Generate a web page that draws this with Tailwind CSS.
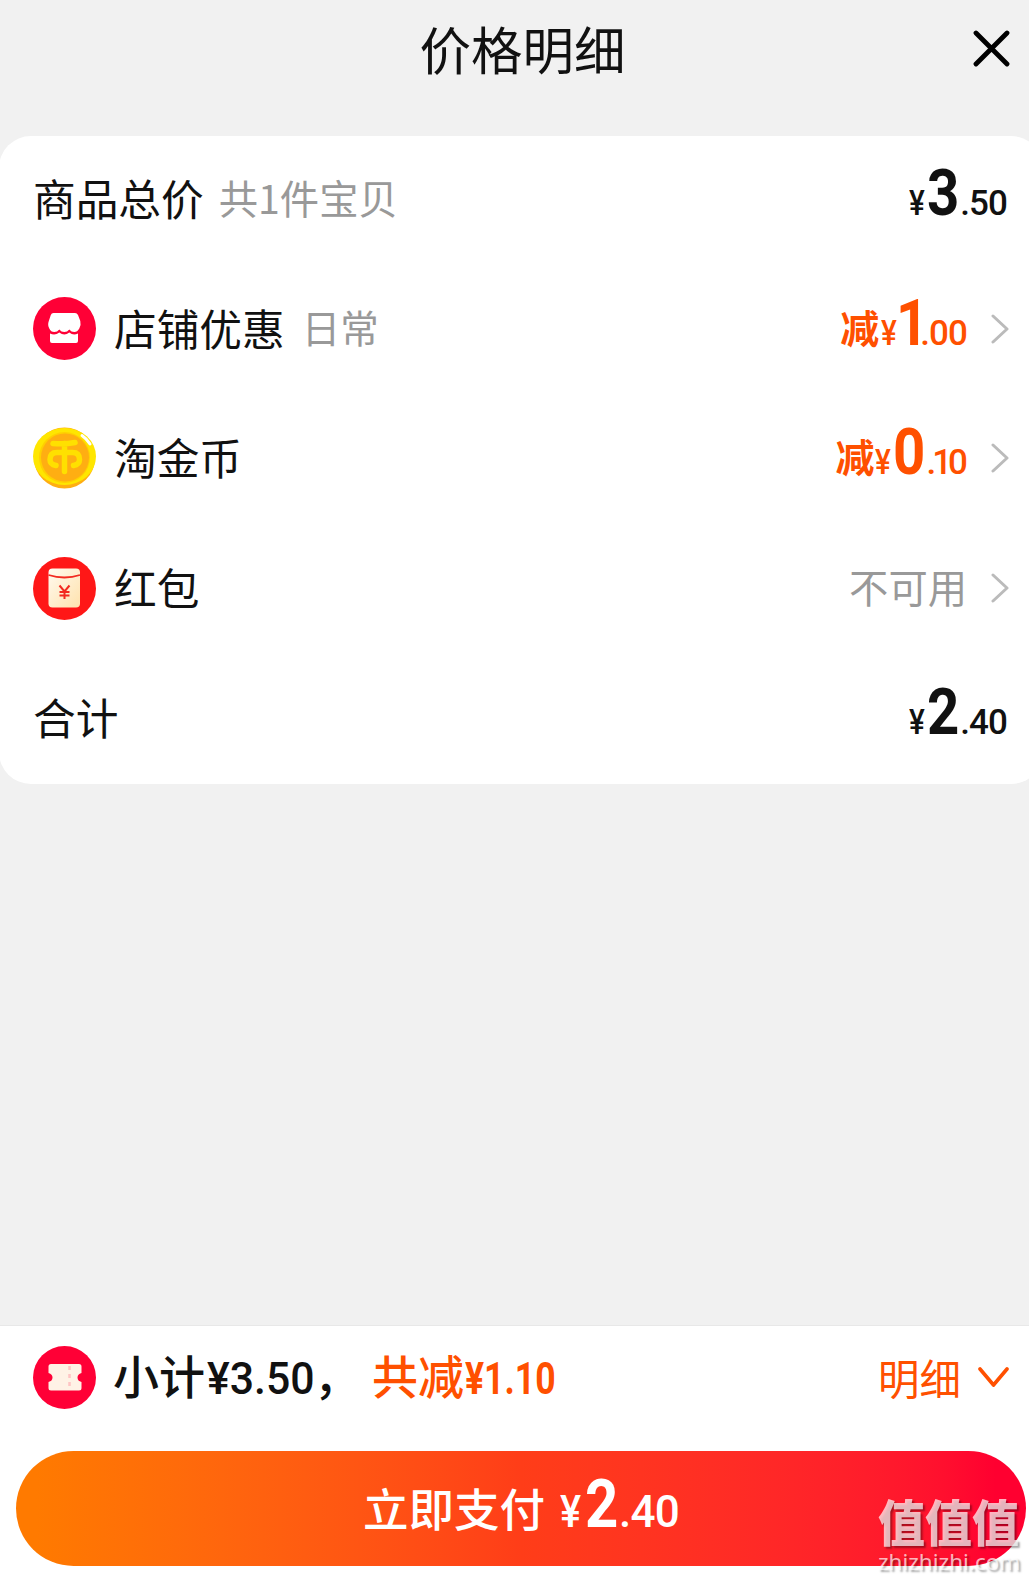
<!DOCTYPE html>
<html lang="zh-CN">
<head>
  <meta charset="UTF-8" />
  <meta name="viewport" content="width=device-width, initial-scale=1.0"/>
  <title>价格明细</title>
  <script src="https://cdn.jsdelivr.net/npm/@tailwindcss/browser@4"></script>
</head>
<body class="bg-[#f1f1f1] text-[#111] font-['Noto_Sans_CJK_SC',sans-serif] overflow-hidden">

  <div class="relative w-[1029px] h-[1580px] flex flex-col overflow-hidden">

    <!-- header -->
    <header class="h-[136px] shrink-0 grid grid-cols-[1fr_auto_1fr] items-start pl-[35px] pr-[19px]">
      <span></span>
      <h1 class="text-[51.5px] leading-[95px]">价格明细</h1>
      <button class="justify-self-end mt-[30px]">
        <svg class="w-[37px] h-[37px]" viewBox="0 0 37 37" fill="none" stroke="#000" stroke-width="4.8" stroke-linecap="round"><path d="M3 3l31 31M34 3L3 34"/></svg>
      </button>
    </header>

    <!-- price card, its right edge runs past the screen -->
    <main class="h-[648px] shrink-0 -ml-px -mr-[14px] pl-[34px] pr-[34px] bg-white rounded-[32px] grid grid-rows-5">
      <div class="flex items-center justify-between pr-[2px] pb-[4px]">
        <div class="flex items-center leading-[60px] pb-[4px]">
          <span class="text-[42.7px]">商品总价</span>
          <span class="text-[39.3px] ml-[15px] text-[#999]">共1件宝贝</span>
        </div>
        <div class="flex items-baseline font-[Roboto,sans-serif] font-medium text-[35px] leading-[60px]">
          <span class="w-[18px] origin-left scale-x-85">¥</span>
          <span class="w-[33px] origin-left scale-x-88 text-[64px] font-bold">3</span>
          <span class="tracking-[-0.9px]">.50</span>
        </div>
      </div>

      <div class="flex items-center pb-[3px]">
        <svg class="w-[63px] h-[63px]" viewBox="0 0 63 63">
          <circle cx="31.5" cy="31.5" r="31.5" fill="#ff0036"/>
          <path fill="#fff" d="M20.500 16h21.500q2 0 3 2l2.300 6q1 4-1 7.500-2 3.500-5 3.500-3 0-5-2.500-2 2.500-5 2.500t-5-2.500q-2 2.500-5 2.500-3.500 0-5-3.500-2-3.500-.500-7.500l2-6q.700-2 2.700-2z"/>
          <path fill="#fff" d="M17 36.500q5 2.500 9.300-1 5 4 10 0 4 3.500 8.700 1v7.500q0 2-2 2H19q-2 0-2-2z"/>
        </svg>
        <span class="text-[42.7px] ml-[18px] pb-[4px]">店铺优惠</span>
        <span class="text-[38.5px] ml-[17px] pb-[4px] text-[#999]">日常</span>
        <div class="ml-auto flex items-baseline font-[Roboto,sans-serif] font-medium text-[35px] leading-[60px] text-[#ff5000]">
          <span class="text-[39px] w-[41px] -translate-y-[2px] font-['Noto_Sans_CJK_SC',sans-serif] font-bold">减</span>
          <span class="w-[15px] origin-left scale-x-85">¥</span>
          <span class="w-[24px] origin-left scale-x-88 text-[64px] font-bold">1</span>
          <span class="tracking-[-0.9px]">.00</span>
        </div>
        <svg class="w-[18px] h-[30px] ml-[24px]" viewBox="0 0 18 30" fill="none" stroke="#bbb" stroke-width="3" stroke-linecap="round" stroke-linejoin="round"><path d="M2 2l14 13L2 28"/></svg>
      </div>

      <div class="flex items-center pb-[3px]">
        <svg class="w-[63px] h-[63px]" viewBox="0 0 63 63">
          <circle cx="31.500" cy="31" r="30.500" fill="#ffae12"/>
          <ellipse cx="31.500" cy="29.500" rx="31.500" ry="28.500" fill="#ffe600"/>
          <circle cx="31.500" cy="30.500" r="25.500" fill="#ffd000"/>
          <circle cx="32" cy="30.500" r="24" fill="#ffae12"/>
          <path fill="none" stroke="#ffe000" stroke-width="5.500" stroke-linecap="round" stroke-linejoin="round" d="M20 16.500q12 1 22-1M31.500 16.500v28M23 38.500q-6-1-6-6 0-7 7-7h15.500q7 0 7 7 0 5-6 6"/>
          <path fill="none" stroke="#fff" stroke-width="3" stroke-linecap="round" d="M49 8.500q5 3.500 8 8.500"/>
        </svg>
        <span class="text-[42.7px] ml-[18px] pb-[4px]">淘金币</span>
        <div class="ml-auto flex items-baseline font-[Roboto,sans-serif] font-medium text-[35px] leading-[60px] text-[#ff5000]">
          <span class="text-[39px] w-[40px] -translate-y-[2px] font-['Noto_Sans_CJK_SC',sans-serif] font-bold">减</span>
          <span class="w-[18px] origin-left scale-x-85">¥</span>
          <span class="w-[33px] origin-left scale-x-88 text-[64px] font-bold">0</span>
          <span class="tracking-[-4px] mr-[3px]">.10</span>
        </div>
        <svg class="w-[18px] h-[30px] ml-[24px]" viewBox="0 0 18 30" fill="none" stroke="#bbb" stroke-width="3" stroke-linecap="round" stroke-linejoin="round"><path d="M2 2l14 13L2 28"/></svg>
      </div>

      <div class="flex items-center pb-[3px]">
        <svg class="w-[63px] h-[63px]" viewBox="0 0 63 63">
          <defs><linearGradient id="packet" x2="1" y2="1"><stop stop-color="#fffaf0"/><stop offset="1" stop-color="#ffe2ad"/></linearGradient></defs>
          <circle cx="31.5" cy="31.500" r="31.500" fill="#ff1717"/>
          <rect x="15.500" y="11.500" width="31.500" height="39" rx="4" fill="url(#packet)"/>
          <path fill="none" stroke="#f22a20" stroke-width="1.800" d="M15.500 18q16 5 31.500 0"/>
          <path fill="none" stroke="#f22a20" stroke-width="2" d="M26.500 28.500l5 6 5-6M31.500 34.500V42M26.500 35h10M26.500 38.500h10"/>
        </svg>
        <span class="text-[42.7px] ml-[18px] pb-[4px]">红包</span>
        <span class="ml-auto text-[39.3px] pb-[3px] text-[#999]">不可用</span>
        <svg class="w-[18px] h-[30px] ml-[24px]" viewBox="0 0 18 30" fill="none" stroke="#bbb" stroke-width="3" stroke-linecap="round" stroke-linejoin="round"><path d="M2 2l14 13L2 28"/></svg>
      </div>

      <div class="flex items-center justify-between pr-[2px] pb-[3px]">
        <span class="text-[42.7px] pb-[3px]">合计</span>
        <div class="flex items-baseline font-[Roboto,sans-serif] font-medium text-[35px] leading-[60px]">
          <span class="w-[18px] origin-left scale-x-85">¥</span>
          <span class="w-[33px] origin-left scale-x-88 text-[64px] font-bold">2</span>
          <span class="tracking-[-0.9px]">.40</span>
        </div>
      </div>
    </main>

    <!-- bottom bar -->
    <footer class="mt-auto h-[255px] shrink-0 bg-white border-t border-[#e8e8e8]">
      <div class="flex items-center h-[102px] pl-[33px] pr-[20px]">
        <svg class="w-[63px] h-[63px]" viewBox="0 0 63 63">
          <circle cx="31.500" cy="31.500" r="31.500" fill="#ff0036"/>
          <path fill="#fff2e6" d="M18 18h28q2.500 0 2.500 2.500V27q-4 1-4 4.500t4 4.500v6q0 2.500-2.500 2.500H18q-2.500 0-2.500-2.500v-6q4-1 4-4.500t-4-4.500v-6.500Q15.500 18 18 18z"/>
          <path stroke="#ffc4c4" stroke-width="2.500" stroke-dasharray="4 4" d="M36.500 20v24"/>
        </svg>
        <div class="ml-[17px] pb-[2px] flex items-baseline font-medium text-[46px] leading-[60px]">
          <span class="w-[94px]">小计</span>
          <span class="w-[107px] origin-left scale-x-95 font-[Roboto,sans-serif] text-[45px] whitespace-nowrap">¥3.50</span>
          <span class="w-[58px]">，</span>
          <span class="w-[93px] text-[#ff5000]">共减</span>
          <span class="w-[95px] origin-left scale-x-79 font-[Roboto,sans-serif] text-[45px] font-bold text-[#ff5000]">¥1.10</span>
        </div>
        <button class="ml-auto flex items-center text-[#ff5000] text-[41.5px]">
          <span>明细</span>
          <svg class="w-[31px] h-[21px] ml-[17px]" viewBox="0 0 31 21" fill="none" stroke="currentColor" stroke-width="3.600" stroke-linecap="round" stroke-linejoin="round"><path d="M2 2l13.500 16L29 2"/></svg>
        </button>
      </div>

      <button class="mt-[23px] ml-[16px] w-[1010px] h-[115px] flex items-center justify-center rounded-full bg-linear-to-r from-[#ff7a00] from-2% via-[#ff3d18] via-50% to-[#ff0030] to-97% text-white">
        <span class="flex items-end font-[Roboto,sans-serif] font-medium text-[44px] leading-[60px]">
          <span class="w-[197px] pb-[5px] text-left text-[45.5px] font-['Noto_Sans_CJK_SC',sans-serif]">立即支付</span>
          <span class="flex items-baseline">
            <span class="w-[25px] origin-left scale-x-90 text-left">¥</span>
            <span class="w-[34px] origin-left scale-x-88 text-left text-[66px] font-bold">2</span>
            <span class="tracking-[-0.8px]">.40</span>
          </span>
        </span>
      </button>
    </footer>

    <!-- watermark -->
    <div class="absolute right-[9px] bottom-[5px] w-[142px] text-white/70 [text-shadow:2px_2px_2px_rgb(0_0_0/0.35)] whitespace-nowrap">
      <div class="text-[47px] leading-[46px] pb-[5px] font-black scale-y-106">值值值</div>
      <div class="font-['Noto_Sans',sans-serif] text-[22.5px] leading-[26px]">zhizhizhi.com</div>
    </div>
  </div>
</body>
</html>
